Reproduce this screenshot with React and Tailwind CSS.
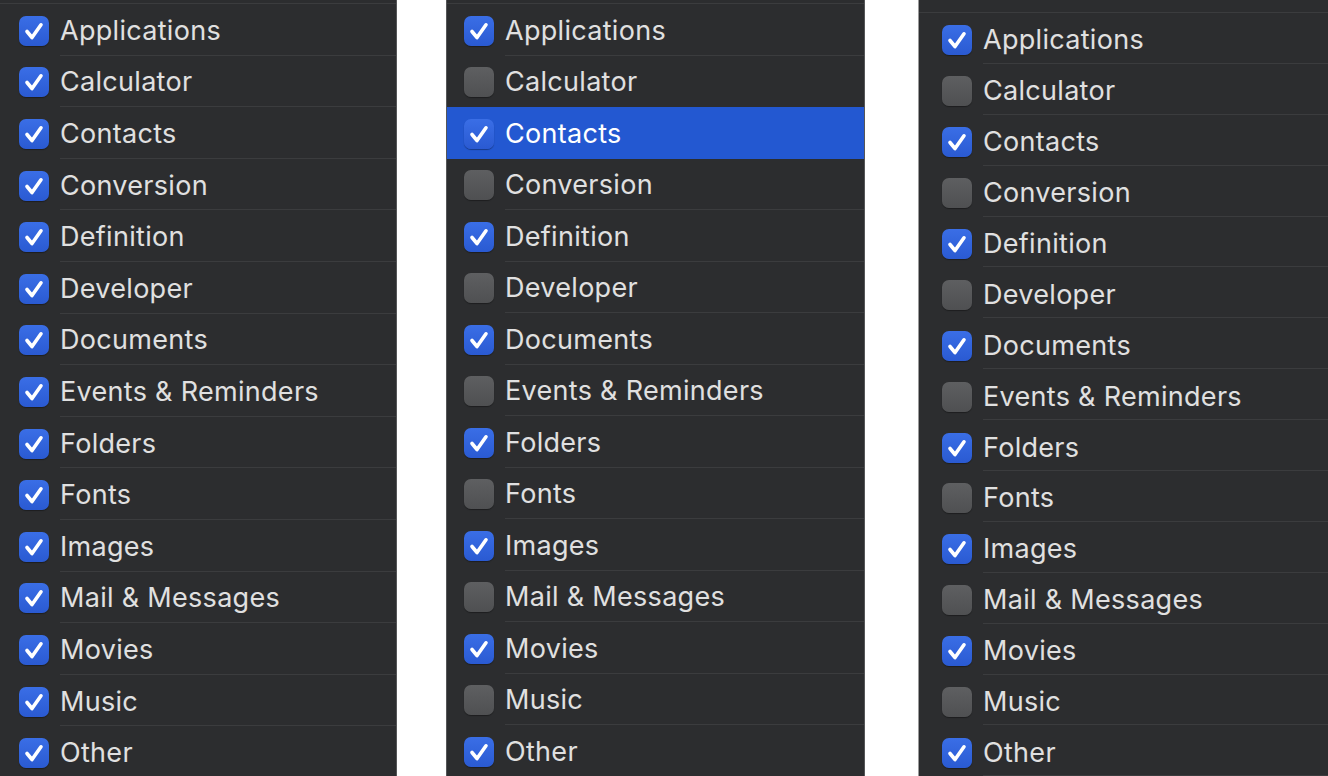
import React from "react";

const items = [
  "Applications",
  "Calculator",
  "Contacts",
  "Conversion",
  "Definition",
  "Developer",
  "Documents",
  "Events & Reminders",
  "Folders",
  "Fonts",
  "Images",
  "Mail & Messages",
  "Movies",
  "Music",
  "Other",
];

function Checkbox({ checked }) {
  if (!checked) {
    return (
      <div className="w-[30px] h-[30px] shrink-0 rounded-[7px] bg-gradient-to-b from-[#5e5f61] to-[#4f5052] shadow-[0_1px_1px_rgba(0,0,0,0.35)]" />
    );
  }
  return (
    <div className="w-[30px] h-[30px] shrink-0 rounded-[7px] bg-gradient-to-b from-[#3a6ee6] to-[#2a5ad2] shadow-[0_1px_1px_rgba(0,0,0,0.35)] flex items-center justify-center">
      <svg viewBox="0 0 30 30" className="w-[30px] h-[30px]">
        <path
          d="M8 15.5 L13 21.5 L22 8.8"
          fill="none"
          stroke="white"
          strokeWidth="3.6"
          strokeLinecap="round"
          strokeLinejoin="round"
        />
      </svg>
    </div>
  );
}

function Panel({ width, rowH, topGap, padL, checkedFn, highlight, rowPad, edge }) {
  return (
    <div
      className={`h-[776px] overflow-hidden bg-[#2c2d2f] shrink-0 ${edge}`}
      style={{ width }}
    >
      <div style={{ height: topGap }} />
      <div className="h-px bg-[#3b3c3e]" />
      {items.map((name, i) => {
        const hl = highlight === i;
        const nextHl = highlight === i + 1;
        return (
          <div
            key={name}
            className={`flex items-stretch ${hl ? "bg-[#2358d1]" : ""}`}
            style={{ height: rowH, paddingLeft: padL }}
          >
            <div className="flex items-center" style={{ paddingTop: rowPad }}>
              <Checkbox checked={checkedFn(i)} />
            </div>
            <div
              className={`flex-1 ml-[11px] flex items-center border-b ${
                hl || nextHl ? "border-transparent" : "border-[#3b3c3e]"
              }`}
              style={{ paddingTop: rowPad }}
            >
              <span
                className={`text-[27px] leading-none tracking-[0.3px] ${
                  hl ? "text-white" : "text-[#e0e0e0]"
                }`}
              >
                {name}
              </span>
            </div>
          </div>
        );
      })}
    </div>
  );
}

export default function App() {
  return (
    <div
      className="w-[1328px] h-[776px] bg-white flex overflow-hidden"
      style={{ fontFamily: "Inter, 'Noto Sans', sans-serif" }}
    >
      <Panel
        width={397}
        rowH={51.6}
        topGap={3}
        padL={19}
        checkedFn={() => true}
        rowPad={2}
        edge="border-r border-[#555658]"
      />
      <div className="w-[49px] shrink-0" />
      <Panel
        width={419}
        rowH={51.5}
        topGap={3}
        padL={17}
        checkedFn={(i) => i % 2 === 0}
        highlight={2}
        rowPad={2}
        edge="border-x border-[#555658]"
      />
      <div className="w-[53px] shrink-0" />
      <Panel
        width={410}
        rowH={50.9}
        topGap={12}
        padL={23}
        checkedFn={(i) => i % 2 === 0}
        rowPad={4}
        edge="border-l border-[#9a9a9a]"
      />
    </div>
  );
}
